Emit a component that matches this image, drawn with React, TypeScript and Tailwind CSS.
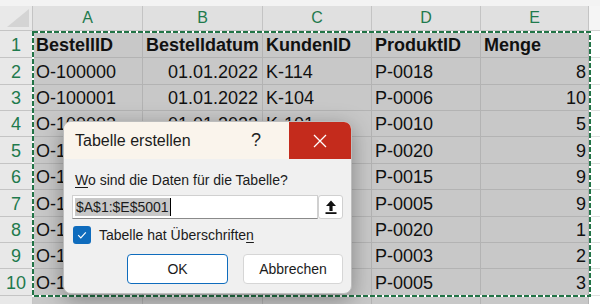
import React from "react";

const columns = [
  { letter: "A", width: "w-[110px]" },
  { letter: "B", width: "w-[120px]" },
  { letter: "C", width: "w-[109px]" },
  { letter: "D", width: "w-[109px]" },
  { letter: "E", width: "w-[108px]" },
];

const rowHeights = [
  "h-[27px]",
  "h-[27px]",
  "h-[26px]",
  "h-[26px]",
  "h-[27px]",
  "h-[26px]",
  "h-[27px]",
  "h-[26px]",
  "h-[26px]",
  "h-[27px]",
  "h-[26px]",
];

const rows: string[][] = [
  ["BestellID", "Bestelldatum", "KundenID", "ProduktID", "Menge"],
  ["O-100000", "01.01.2022", "K-114", "P-0018", "8"],
  ["O-100001", "01.01.2022", "K-104", "P-0006", "10"],
  ["O-100002", "01.01.2022", "K-101", "P-0010", "5"],
  ["O-100003", "01.01.2022", "K-117", "P-0020", "9"],
  ["O-100004", "02.01.2022", "K-109", "P-0015", "9"],
  ["O-100005", "02.01.2022", "K-102", "P-0005", "9"],
  ["O-100006", "02.01.2022", "K-111", "P-0020", "1"],
  ["O-100007", "03.01.2022", "K-106", "P-0003", "2"],
  ["O-100008", "03.01.2022", "K-113", "P-0005", "3"],
  ["", "", "", "", ""],
];

const align = (col: number, row: number) => {
  if (row === 0) return "justify-start pl-[3px] font-bold";
  if (col === 1) return "justify-end pr-[4px]";
  if (col === 4) return "justify-end pr-[2px]";
  return "justify-start pl-[3px]";
};

function Sheet() {
  return (
    <div className="flex flex-col">
      <div className="h-[6px] bg-[#f3f3f3]" />
      <div className="flex h-[25px]">
        <div className="relative w-[33px] border-r border-b border-[#c4c4c4] bg-[#e9e9e9]">
          <svg className="absolute right-[3px] bottom-[3px]" width="22" height="18" viewBox="0 0 22 18">
            <polygon points="22,0 22,18 0,18" fill="#d4d4d4" />
          </svg>
        </div>
        {columns.map((c) => (
          <div
            key={c.letter}
            className={`${c.width} flex items-center justify-center border-r border-b border-[#c4c4c4] bg-[#e0e0e0] text-[16px] text-[#1f7a4d]`}
          >
            {c.letter}
          </div>
        ))}
        <div className="flex-1 border-b border-[#d4d4d4] bg-[#f5f5f5]" />
      </div>
      {rows.map((r, ri) => (
        <div key={ri} className={`flex ${rowHeights[ri]}`}>
          <div className="w-[33px] flex items-end justify-center pb-[3px] border-r border-b border-[#c4c4c4] bg-[#e8e8e8] text-[18px] leading-[18px] text-[#1f7a4d]">
            {ri < 10 ? ri + 1 : ""}
          </div>
          {r.map((v, ci) => (
            <div
              key={ci}
              className={`${columns[ci].width} flex items-end pb-[3px] border-r border-b border-[#b3b3b3] bg-[#c8c8c8] text-[18px] leading-[18px] text-[#111111] whitespace-nowrap overflow-hidden ${align(ci, ri)}`}
            >
              {v}
            </div>
          ))}
          <div className="flex-1 border-b border-[#e2e2e2] bg-white" />
        </div>
      ))}
    </div>
  );
}

function Marquee() {
  return (
    <svg className="absolute left-[32px] top-[31px]" width="559" height="266" viewBox="0 0 559 266">
      <rect x="1" y="1" width="557" height="264" fill="none" stroke="#ffffff" strokeWidth="2" />
      <rect x="1" y="1" width="557" height="264" fill="none" stroke="#217346" strokeWidth="2" strokeDasharray="5 2" />
    </svg>
  );
}

function Dialog() {
  return (
    <div className="absolute left-[63px] top-[121px] w-[289px] h-[173px] flex flex-col overflow-hidden rounded-[8px] border border-[#bdbdbd] bg-[#f0f0f0] shadow-[0_6px_22px_rgba(0,0,0,0.35)]">
      <div className="flex h-[37px] bg-[#faf4ec]">
        <div className="flex-1 flex items-center pl-[11px] text-[16px] text-[#1b1b1b]">Tabelle erstellen</div>
        <div className="w-[66px] flex items-center justify-center text-[18px] text-[#222222]">?</div>
        <div className="w-[62px] flex items-center justify-center bg-[#c42b1c]">
          <svg width="14" height="14" viewBox="0 0 14 14">
            <path d="M1 1 L13 13 M13 1 L1 13" stroke="#ffffff" strokeWidth="1.3" fill="none" />
          </svg>
        </div>
      </div>
      <div className="flex flex-col px-[8px] pt-[12px]">
        <div className="pl-[3px] text-[14px] leading-[18px] text-[#1b1b1b]">
          <span className="underline underline-offset-2">W</span>o sind die Daten für die Tabelle?
        </div>
        <div className="mt-[6px] flex h-[24px]">
          <div className="flex-1 flex items-center pl-[2px] border border-[#d0d0d0] border-b-[#8a8a8a] bg-white">
            <span className="bg-[#c8c8c8] px-[1px] text-[14px] leading-[18px] text-[#1b1b1b]">$A$1:$E$5001</span>
            <span className="h-[18px] w-px bg-black" />
          </div>
          <div className="w-[25px] flex items-center justify-center rounded-[3px] border border-[#d0d0d0] bg-white">
            <svg width="14" height="16" viewBox="0 0 14 16">
              <polygon points="7,1.5 12,7 8.6,7 8.6,12 5.4,12 5.4,7 2,7" fill="#111111" />
              <rect x="1.5" y="13.2" width="11" height="1.8" fill="#111111" />
            </svg>
          </div>
        </div>
        <div className="mt-[7px] flex h-[18px] items-center gap-[8px] pl-[1px]">
          <div className="w-[18px] h-[18px] flex items-center justify-center rounded-[3px] bg-[#0f6cbd]">
            <svg width="12" height="12" viewBox="0 0 12 12">
              <path d="M2.2 6.2 L4.8 8.8 L9.8 3.4" stroke="#ffffff" strokeWidth="1.2" fill="none" />
            </svg>
          </div>
          <div className="text-[14px] leading-[18px] text-[#1b1b1b]">
            Tabelle hat Überschrifte<span className="underline underline-offset-2">n</span>
          </div>
        </div>
        <div className="mt-[10px] flex justify-end gap-[15px]">
          <div className="w-[101px] h-[30px] flex items-center justify-center rounded-[4px] border border-[#0f6cbd] bg-white text-[14px] text-[#1b1b1b]">
            OK
          </div>
          <div className="w-[100px] h-[30px] flex items-center justify-center rounded-[4px] border border-[#d6d6d6] bg-white text-[14px] text-[#1b1b1b]">
            Abbrechen
          </div>
        </div>
      </div>
    </div>
  );
}

export default function App() {
  return (
    <div className="relative w-[600px] h-[304px] overflow-hidden bg-white font-['Liberation_Sans',Arial,sans-serif]">
      <Sheet />
      <Marquee />
      <Dialog />
    </div>
  );
}
